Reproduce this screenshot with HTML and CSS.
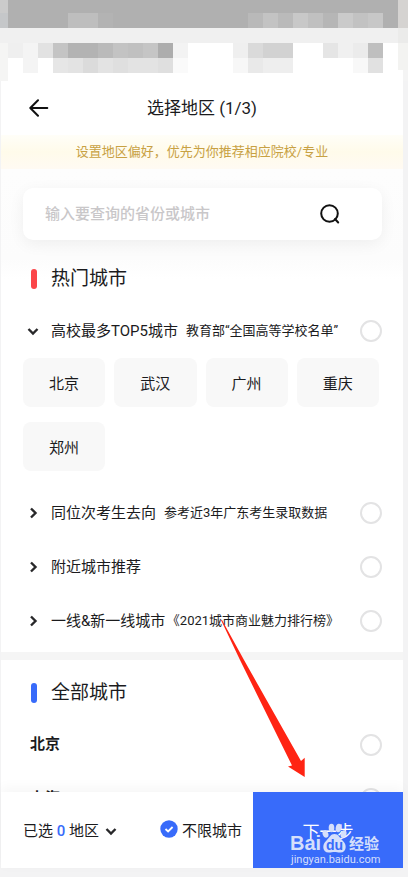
FILE: index.html
```html
<!DOCTYPE html>
<html lang="zh-CN">
<head>
<meta charset="utf-8">
<meta name="viewport" content="width=device-width, initial-scale=1">
<title>选择地区</title>
<link rel="stylesheet" href="styles.css">
</head>
<body>
<svg class="mosaic" viewBox="0 0 408 81" preserveAspectRatio="none" shape-rendering="crispEdges" aria-hidden="true">
  <rect width="408" height="81" fill="#fff"/>
  <rect width="398" height="28" fill="#b0b0b0"/>
  <rect width="8" height="13" fill="#cbcbcb"/><rect y="13" width="8" height="15" fill="#c5c7c9"/>
  <rect x="68" y="13" width="30" height="15" fill="#bebebe"/><rect x="98" y="13" width="15" height="15" fill="#b3b3b3"/>
  <rect x="248" y="13" width="15" height="15" fill="#b9b9b9"/><rect x="263" y="13" width="15" height="15" fill="#c3c3c3"/><rect x="278" y="13" width="15" height="15" fill="#bababa"/><rect x="293" y="13" width="15" height="15" fill="#c8c8c8"/><rect x="308" y="13" width="15" height="15" fill="#c0c0c0"/><rect x="323" y="13" width="15" height="15" fill="#b6b6b6"/><rect x="338" y="13" width="15" height="15" fill="#cacaca"/><rect x="353" y="13" width="15" height="15" fill="#c2c2c2"/><rect x="368" y="13" width="15" height="15" fill="#c7c7c7"/>
  <rect x="398" width="10" height="28" fill="#d5d3d1"/>
  <rect y="28" width="408" height="15" fill="#f0f0f0"/><rect x="398" y="28" width="10" height="15" fill="#ebebea"/>
  <rect y="43" width="8" height="38" fill="#f5f5f4"/><rect x="398" y="43" width="10" height="27" fill="#f3f3f1"/><rect x="403" y="70" width="5" height="11" fill="#f4f4f4"/>
  <rect x="8" y="43" width="15" height="15" fill="#efefef"/><rect x="23" y="43" width="15" height="30" fill="#f4f4f4"/><rect x="38" y="43" width="15" height="15" fill="#e2e2e2"/><rect x="53" y="43" width="15" height="15" fill="#c4c4c4"/><rect x="68" y="43" width="30" height="15" fill="#b3b3b3"/><rect x="98" y="43" width="15" height="15" fill="#bababa"/><rect x="113" y="43" width="15" height="15" fill="#c3c3c3"/><rect x="128" y="43" width="15" height="15" fill="#c0c0c0"/><rect x="143" y="43" width="15" height="15" fill="#c5c5c5"/><rect x="158" y="43" width="15" height="15" fill="#adadad"/><rect x="173" y="43" width="15" height="15" fill="#f3f3f3"/>
  <rect x="53" y="58" width="15" height="15" fill="#e6e6e6"/><rect x="68" y="58" width="15" height="15" fill="#e3e3e3"/><rect x="83" y="58" width="15" height="15" fill="#dbdbdb"/><rect x="98" y="58" width="15" height="15" fill="#e3e3e3"/><rect x="113" y="58" width="15" height="15" fill="#dfdfdf"/><rect x="128" y="58" width="30" height="15" fill="#e3e3e3"/><rect x="158" y="58" width="15" height="15" fill="#dfdfdf"/><rect x="173" y="58" width="15" height="15" fill="#fafafa"/>
  <rect x="233" y="43" width="15" height="15" fill="#efefef"/><rect x="248" y="43" width="15" height="15" fill="#dadada"/><rect x="263" y="43" width="30" height="15" fill="#d2d2d2"/><rect x="323" y="43" width="15" height="15" fill="#e5e5e5"/><rect x="338" y="43" width="15" height="15" fill="#f0f0f0"/><rect x="353" y="43" width="15" height="15" fill="#ebebeb"/><rect x="368" y="43" width="15" height="15" fill="#bfbfbf"/>
  <rect x="233" y="58" width="15" height="15" fill="#f7f7f7"/><rect x="248" y="58" width="15" height="15" fill="#e9e9e9"/><rect x="263" y="58" width="30" height="15" fill="#eee"/><rect x="353" y="58" width="15" height="15" fill="#f8f8f8"/><rect x="368" y="58" width="15" height="15" fill="#e1e1e1"/>
</svg>

<div class="app">
  <header class="header">
    <button class="back" type="button" aria-label="返回">
      <svg width="20" height="18" viewBox="0 0 20 18" fill="none" stroke="#111" stroke-width="2" stroke-linecap="round" stroke-linejoin="round"><path d="M18.300 9H1.500M9 1.300L1.300 9L9 16.700"/></svg>
    </button>
    <h1 class="title">选择地区 (1/3)</h1>
  </header>
  <p class="notice">设置地区偏好，优先为你推荐相应院校/专业</p>

  <main class="content">
    <section class="panel hot">
      <form class="search">
        <input type="text" placeholder="输入要查询的省份或城市" aria-label="搜索省份或城市">
        <button type="button" aria-label="搜索">
          <svg width="20" height="20" viewBox="0 0 20 20" fill="none" stroke="#111" stroke-width="2"><circle cx="9.500" cy="9.500" r="8.300"/><path d="M15 15l3.200 3.500" stroke-linecap="round"/></svg>
        </button>
      </form>
      <h2 class="heading">热门城市</h2>
      <div class="row">
        <button class="toggle" type="button" aria-expanded="true"><svg class="chev" viewBox="0 0 12 12"><path d="M1.500 4L6 8.500L10.500 4"/></svg><span>高校最多TOP5城市</span><small>教育部“全国高等学校名单”</small></button>
        <input class="pick" type="checkbox" aria-label="高校最多TOP5城市">
      </div>
      <div class="chips">
        <button type="button">北京</button><button type="button">武汉</button><button type="button">广州</button><button type="button">重庆</button><button type="button">郑州</button>
      </div>
      <div class="row">
        <button class="toggle" type="button" aria-expanded="false"><svg class="chev" viewBox="0 0 12 12"><path d="M4 1.500L8.500 6L4 10.500"/></svg><span>同位次考生去向</span><small>参考近3年广东考生录取数据</small></button>
        <input class="pick" type="checkbox" aria-label="同位次考生去向">
      </div>
      <div class="row">
        <button class="toggle" type="button" aria-expanded="false"><svg class="chev" viewBox="0 0 12 12"><path d="M4 1.500L8.500 6L4 10.500"/></svg><span>附近城市推荐</span></button>
        <input class="pick" type="checkbox" aria-label="附近城市推荐">
      </div>
      <div class="row">
        <button class="toggle" type="button" aria-expanded="false"><svg class="chev" viewBox="0 0 12 12"><path d="M4 1.500L8.500 6L4 10.500"/></svg><span>一线&amp;新一线城市</span><small>《2021城市商业魅力排行榜》</small></button>
        <input class="pick" type="checkbox" aria-label="一线&amp;新一线城市">
      </div>
    </section>

    <section class="panel all">
      <h2 class="heading blue">全部城市</h2>
      <div class="row city"><label for="bj">北京</label><input class="pick" id="bj" type="checkbox"></div>
      <div class="row city"><label for="sh">上海</label><input class="pick" id="sh" type="checkbox"></div>
    </section>
  </main>

  <footer class="bar">
    <div class="status">
      <button class="selected" type="button">已选 <b>0</b> 地区<svg class="chev" viewBox="0 0 12 12"><path d="M1.500 4L6 8.500L10.500 4"/></svg></button>
      <label class="any"><input type="checkbox" checked><svg width="18" height="18" viewBox="0 0 18 18" aria-hidden="true"><circle cx="9" cy="9" r="8.700" fill="#386bfa"/><path d="M5.500 9l2.600 2.500L12.600 7" fill="none" stroke="#fff" stroke-width="1.800"/></svg>不限城市</label>
    </div>
    <div class="action">
      <button class="next" type="button">下一步</button>
      <svg class="watermark" width="94" height="48" viewBox="0 0 94 48" fill="#d5dffb" aria-hidden="true">
        <text class="brand" x="0" y="31">Bai</text>
        <ellipse cx="35.500" cy="15" rx="2.800" ry="3.800" transform="rotate(-20 35.500 15)"/><ellipse cx="41.500" cy="9" rx="2.800" ry="4.200"/><ellipse cx="48.500" cy="9" rx="2.800" ry="4.200" transform="rotate(10 48.500 9)"/><ellipse cx="53.500" cy="15" rx="2.800" ry="3.800" transform="rotate(20 53.500 15)"/>
        <path d="M44.500 15c4 0 5 3.500 8 6.500c5 4 4 12-2 12c-3 0-4-.5-6-.5s-3 .5-6 .5c-6 0-7-8-2-12c3-3 4-6.500 8-6.500z"/>
        <text class="du" x="36" y="31">du</text>
        <text class="cn" x="59" y="30">经验</text>
        <text class="url" x="1" y="44">jingyan.baidu.com</text>
      </svg>
    </div>
  </footer>
</div>

<svg class="pointer" width="86" height="160" viewBox="0 0 86 160" aria-hidden="true"><path fill="#ff2413" d="M1 2L2 2L24 42L81 143L84.700 139.700V159L68 148.500L72 147.500L20 42Z"/></svg>
</body>
</html>
```

FILE: styles.css
```css
* { box-sizing: border-box; }

body {
  position: relative;
  display: flex;
  flex-direction: column;
  height: 100vh;
  margin: 0;
  padding-bottom: 9px;
  overflow: hidden;
  background: #f3f3f4;
  color: #1b1b1d;
  font-family: Roboto, "Noto Sans CJK SC", sans-serif;
  font-size: 15px;
}

button, input { font: inherit; color: inherit; }
button { padding: 0; border: 0; background: none; }
h1, h2, p { margin: 0; font-weight: 400; }

.mosaic { display: block; flex: none; width: 100%; height: 81px; }

.app {
  display: flex;
  flex: 1;
  flex-direction: column;
  min-height: 0;
  margin: 0 5px 0 1px;
  background: #fff;
}

.header {
  display: grid;
  grid-template-columns: 48px 1fr 48px;
  align-items: center;
  height: 54px;
}
.back { display: flex; justify-content: flex-end; }
.title { font-size: 17px; line-height: 24px; text-align: center; }

.notice {
  padding: 4px 0;
  background: linear-gradient(#fffef8, #fffbea 50%, #fffaf3);
  color: #c8a143;
  font-size: 13px;
  line-height: 26px;
  text-align: center;
}

.content { flex: 1; min-height: 0; overflow: hidden; background: #f5f5f5; }
.panel { padding: 0 21px 0 22px; background: #fff; }
.hot { padding-top: 19px; padding-bottom: 4px; background: linear-gradient(#fdfdfd, #fcfcfc 90px, #fff 110px); }
.all { margin-top: 8px; padding-top: 10px; }

.search {
  display: flex;
  align-items: center;
  height: 52px;
  padding: 0 42px 0 22px;
  border-radius: 10px;
  background: #fff;
  box-shadow: 0 4px 16px rgba(0, 0, 0, .06);
}
.search input {
  flex: 1;
  min-width: 0;
  padding: 0;
  border: 0;
  outline: 0;
  background: none;
  font-weight: 500;
}
.search input::placeholder { color: #c9c7c9; opacity: 1; }
.search button { display: flex; }

.heading {
  display: flex;
  align-items: center;
  gap: 14px;
  margin: 24px 0 10px 8px;
  font-size: 19px;
  line-height: 30px;
}
.heading::before {
  width: 6px;
  height: 20px;
  border-radius: 3px;
  background: #fb4549;
  content: "";
}
.heading.blue { margin-top: 8px; }
.heading.blue::before { background: #386bfa; }

.row { display: flex; align-items: center; justify-content: space-between; height: 54px; }
.toggle {
  display: flex;
  align-items: center;
  padding-left: 4px;
  white-space: nowrap;
  text-spacing-trim: trim-start;
}
.toggle span { margin: 0 8px 0 12px; }
.toggle small { font-size: 13px; }
.toggle span, .toggle small { padding-bottom: 3px; }

.chev {
  flex: none;
  width: 12px;
  height: 12px;
  fill: none;
  stroke: #28282a;
  stroke-width: 2.400;
}

.pick {
  flex: none;
  width: 22px;
  height: 22px;
  margin: 0;
  border: 2px solid #e3e3e4;
  border-radius: 50%;
  appearance: none;
  background: #fff;
}

.chips {
  display: grid;
  grid-template-columns: repeat(4, 1fr);
  gap: 15px 9px;
  margin: 0 3px 15px 0;
}
.chips button { height: 49px; border-radius: 8px; background: #f8f8f8; }

.city { padding-left: 7px; font-weight: 700; }
.city label { padding-bottom: 5px; }

.bar {
  position: relative;
  display: flex;
  height: 76px;
  background: #fff;
  box-shadow: 0 -4px 12px rgba(0, 0, 0, .04);
}
.status {
  display: flex;
  flex: 1;
  align-items: center;
  justify-content: space-between;
  padding: 0 11px 2px 22px;
  white-space: nowrap;
}
.selected b { color: #386bfa; font-weight: 500; }
.selected .chev { margin-left: 6px; vertical-align: -1px; }
.any { position: relative; display: flex; align-items: center; gap: 4px; }
.any input { position: absolute; width: 18px; height: 18px; margin: 0; opacity: 0; }

.action { position: relative; flex: 0 0 150px; display: flex; }
.next { flex: 1; background: #386bfa; color: #fff; font-size: 17px; }

.watermark { position: absolute; right: 19px; bottom: 1px; pointer-events: none; }
.brand { font: 700 20px "Liberation Sans", sans-serif; }
.du { fill: #386bfa; font: 700 14px "Liberation Sans", sans-serif; }
.cn { font: 700 15px "Noto Sans CJK SC", sans-serif; }
.url { font: 11px Roboto, sans-serif; }

.pointer { position: absolute; top: 618px; left: 220px; pointer-events: none; }
```
